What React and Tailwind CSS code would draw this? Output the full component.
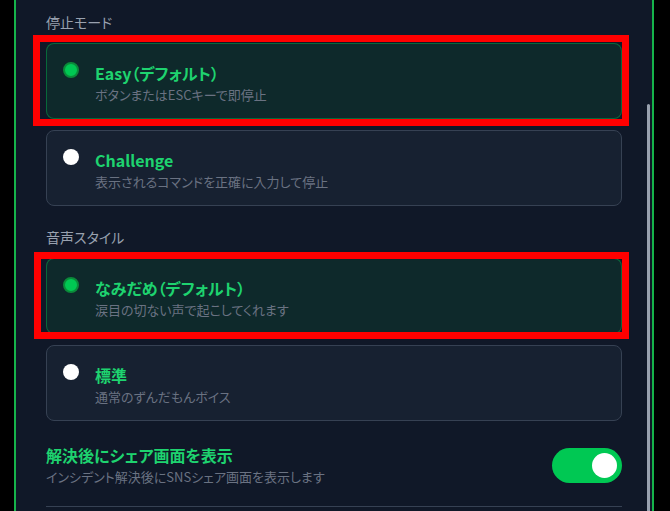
const FONT = {
  fontFamily: '"Noto Sans CJK JP", "Noto Sans", sans-serif',
};

const modes = [
  { id: "easy", title: "Easy（デフォルト）", desc: "ボタンまたはESCキーで即停止", checked: true },
  { id: "challenge", title: "Challenge", desc: "表示されるコマンドを正確に入力して停止", checked: false },
];

const voices = [
  { id: "namidame", title: "なみだめ（デフォルト）", desc: "涙目の切ない声で起こしてくれます", checked: true },
  { id: "normal", title: "標準", desc: "通常のずんだもんボイス", checked: false },
];

function Radio({ checked }) {
  if (checked) {
    return (
      <span className="mt-px block h-4 w-4 shrink-0 rounded-full border-2 border-[#0b8a3a] bg-[#00c853]" />
    );
  }
  return <span className="mt-px block h-4 w-4 shrink-0 rounded-full bg-white" />;
}

function OptionCard({ item, highlight }) {
  return (
    <div className="relative">
      <div
        className={
          item.checked
            ? "flex gap-4 rounded-lg border border-green-500/40 bg-green-500/10 pb-[13px] pl-4 pt-[17px]"
            : "flex gap-4 rounded-lg border border-gray-700 bg-gray-800/50 pb-[13px] pl-4 pt-[17px]"
        }
      >
        <Radio checked={item.checked} />
        <div>
          <p className="text-base font-bold leading-6 text-[#1ed36f]">{item.title}</p>
          <p className="text-[13px] leading-5 text-gray-500">{item.desc}</p>
        </div>
      </div>
      {highlight === "top" && (
        <div className="pointer-events-none absolute -bottom-[7px] -left-[13px] -right-[7px] -top-[8px] border-[7px] border-[#ff0000]" />
      )}
      {highlight === "second" && (
        <div className="pointer-events-none absolute -bottom-[5px] -left-[12px] -right-[7px] -top-[6px] border-[7px] border-[#ff0000]" />
      )}
    </div>
  );
}

function Section({ label, items, highlight, className }) {
  return (
    <section className={className}>
      <h3 className="mb-[11px] text-sm leading-5 text-gray-400">{label}</h3>
      <div className="flex flex-col gap-[11px]">
        {items.map((item) => (
          <OptionCard key={item.id} item={item} highlight={item.checked ? highlight : null} />
        ))}
      </div>
    </section>
  );
}

export default function App() {
  return (
    <div
      className="h-[511px] w-[670px] overflow-hidden bg-black pl-[14px] [font-feature-settings:'palt']"
      style={FONT}
    >
      <div className="relative h-full w-[640px] border-x-2 border-[#16b34a] bg-gray-900 px-[30px] pt-3">
        <Section label="停止モード" items={modes} highlight="top" />
        <Section label="音声スタイル" items={voices} highlight="second" className="mt-[21px]" />

        <div className="mt-[22px] flex items-center justify-between border-b border-gray-700 pb-[19px]">
          <div>
            <p className="text-base font-bold leading-6 text-[#1ed36f]">解決後にシェア画面を表示</p>
            <p className="text-[13px] leading-5 text-gray-500">
              インシデント解決後にSNSシェア画面を表示します
            </p>
          </div>
          <button className="flex h-[35px] w-[70px] items-center justify-end rounded-full bg-[#00c853] pr-[5px]">
            <span className="block h-[25px] w-[25px] rounded-full bg-white" />
          </button>
        </div>

        <div className="absolute right-[2px] top-[104px] h-[420px] w-[3px] rounded-t-sm bg-gray-400" />
      </div>
    </div>
  );
}
